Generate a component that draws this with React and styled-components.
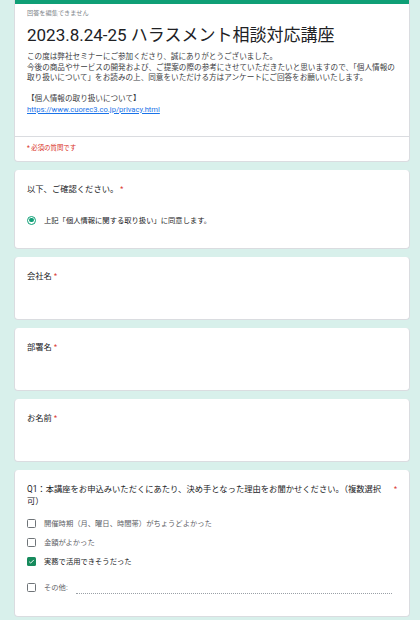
import React from 'react';
import styled, { createGlobalStyle } from 'styled-components';

const GlobalStyle = createGlobalStyle`
  html, body {
    margin: 0;
    padding: 0;
    background: #d8f0eb;
  }
  body {
    font-family: Roboto, "Noto Sans CJK JP", sans-serif;
    color: #202124;
  }
`;

const Page = styled.div`
  display: flex;
  flex-direction: column;
  gap: 8px;
  width: 396px;
  margin-left: 14px;
  padding-bottom: 8px;
`;

const Card = styled.section`
  background: #fff;
  border: 1px solid #dadce0;
  border-top: none;
  border-radius: 4px;
  box-sizing: border-box;
  padding: ${(p) => p.$pad || '13px 12px 0'};
  min-height: ${(p) => p.$height || 'auto'};
  display: flex;
  flex-direction: column;
`;

const HeaderCard = styled(Card)`
  border-radius: 0 0 4px 4px;
  padding: 0;
  overflow: hidden;
`;

const TopBar = styled.div`
  height: 4px;
  background: #0f9f76;
`;

const HeaderBody = styled.div`
  padding: 5px 12px 21px;
  display: flex;
  flex-direction: column;
`;

const Notice = styled.div`
  font-size: 6.2px;
  line-height: 8px;
  color: #80868b;
`;

const Title = styled.h1`
  margin: 8px 0 7px;
  font-size: 17px;
  line-height: 20px;
  font-weight: 400;
  color: #202124;
`;

const Desc = styled.div`
  font-size: 7.6px;
  line-height: 10.5px;
  color: #3c4043;
`;

const Link = styled.a`
  color: #1a73e8;
  text-decoration: underline;
`;

const Divider = styled.div`
  height: 1px;
  background: #dadce0;
`;

const Required = styled.div`
  padding: 7px 12px 8px;
  font-size: 6.4px;
  line-height: 9px;
  color: #d93025;
`;

const Question = styled.div`
  display: flex;
  align-items: flex-start;
  gap: 2px;
  font-size: 8.3px;
  line-height: 12px;
  color: #202124;
`;

const QText = styled.div`
  flex: ${(p) => (p.$grow ? 1 : '0 1 auto')};
`;

const Star = styled.span`
  color: #d93025;
  font-size: 7px;
`;

const Options = styled.div`
  display: flex;
  flex-direction: column;
  gap: ${(p) => p.$gap || '7px'};
  margin-top: ${(p) => p.$top || '10px'};
`;

const Option = styled.label`
  display: flex;
  align-items: center;
  gap: 8px;
  height: 12px;
  font-size: 7.3px;
  color: ${(p) => (p.$dark ? '#202124' : '#5f6368')};
  margin-top: ${(p) => p.$extra || '0'};
`;

const Radio = styled.span`
  width: 9px;
  height: 9px;
  border: 1.3px solid #0f9f76;
  border-radius: 50%;
  box-sizing: border-box;
  display: flex;
  align-items: center;
  justify-content: center;
  flex: none;
  &::after {
    content: '';
    width: 4.4px;
    height: 4.4px;
    border-radius: 50%;
    background: #0f9f76;
  }
`;

const Box = styled.span`
  width: 9px;
  height: 9px;
  box-sizing: border-box;
  border-radius: 1.5px;
  border: ${(p) => (p.$checked ? 'none' : '1.3px solid #6f7478')};
  background: ${(p) => (p.$checked ? '#168a5c' : '#fff')};
  display: flex;
  align-items: center;
  justify-content: center;
  flex: none;
`;

const OtherLine = styled.div`
  flex: 1;
  align-self: flex-end;
  margin: 0 5px -1px 0;
  border-bottom: 1px dotted #9aa0a6;
`;

const Check = () => (
  <svg width="7" height="7" viewBox="0 0 24 24">
    <path d="M4 12.5l5 5L20 6.5" fill="none" stroke="#fff" strokeWidth="3.2" />
  </svg>
);

const textFields = ['会社名', '部署名', 'お名前'];

const reasons = [
  { text: '開催時期（月、曜日、時間帯）がちょうどよかった' },
  { text: '金額がよかった' },
  { text: '実務で活用できそうだった', checked: true },
];

export default function App() {
  return (
    <>
      <GlobalStyle />
      <Page>
        <HeaderCard>
          <TopBar />
          <HeaderBody>
            <Notice>回答を編集できません</Notice>
            <Title>2023.8.24-25 ハラスメント相談対応講座</Title>
            <Desc>
              この度は弊社セミナーにご参加くださり、誠にありがとうございました。
              <br />
              今後の商品やサービスの開発および、ご提案の際の参考にさせていただきたいと思いますので、「個人情報の
              <br />
              取り扱いについて」をお読みの上、同意をいただける方はアンケートにご回答をお願いいたします。
              <br />
              <br />
              【個人情報の取り扱いについて】
              <br />
              <Link href="#">https://www.cuorec3.co.jp/privacy.html</Link>
            </Desc>
          </HeaderBody>
          <Divider />
          <Required>* 必須の質問です</Required>
        </HeaderCard>

        <Card $height="79px">
          <Question>
            <QText>以下、ご確認ください。</QText>
            <Star>*</Star>
          </Question>
          <Options $top="19px">
            <Option $dark>
              <Radio />
              上記「個人情報に関する取り扱い」に同意します。
            </Option>
          </Options>
        </Card>

        {textFields.map((label) => (
          <Card key={label} $height="63px">
            <Question>
              <QText>{label}</QText>
              <Star>*</Star>
            </Question>
          </Card>
        ))}

        <Card $height="147px">
          <Question>
            <QText $grow>
              Q1：本講座をお申込みいただくにあたり、決め手となった理由をお聞かせください。（複数選択
              <br />
              可）
            </QText>
            <Star>*</Star>
          </Question>
          <Options $gap="7px" $top="10px">
            {reasons.map((r) => (
              <Option key={r.text} $dark={r.checked}>
                <Box $checked={r.checked}>{r.checked && <Check />}</Box>
                {r.text}
              </Option>
            ))}
            <Option $extra="7px">
              <Box />
              その他:
              <OtherLine />
            </Option>
          </Options>
        </Card>
      </Page>
    </>
  );
}
